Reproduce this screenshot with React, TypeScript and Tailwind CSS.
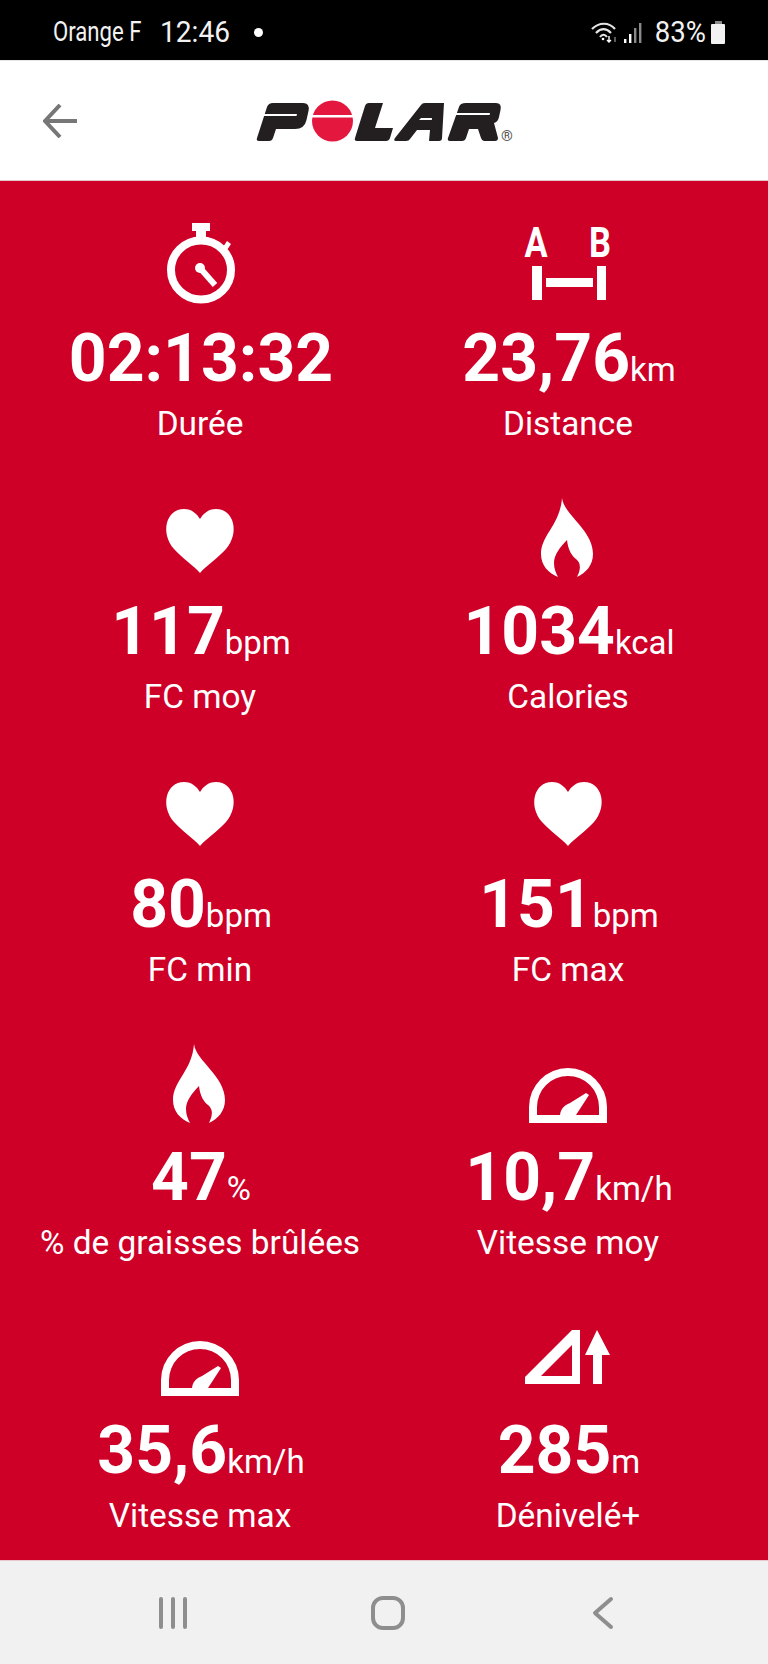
import React from 'react';

// --- ICONS ---
const Stopwatch = () => (
  <svg width="100" height="84" viewBox="0 0 100 84" fill="white">
    <rect x="42" y="1" width="18" height="8" />
    <rect x="46" y="9" width="10" height="10" />
    <ellipse cx="51" cy="48" rx="30" ry="29.5" fill="none" stroke="white" strokeWidth="8" />
    <path d="M73 25 L77 19 L81 22 L77 28 Z" />
    <circle cx="50" cy="46" r="5" />
    <path d="M50 46 L65 63" stroke="white" strokeWidth="6" />
  </svg>
);

const AB = () => (
  <div className="w-[100px] h-[84px] flex flex-col">
    <div className="h-[40px] px-[6px] flex justify-between text-[42px] leading-[41px] font-bold">
      <span className="w-[24px] flex justify-center scale-x-[.82]">A</span>
      <span className="w-[24px] flex justify-center scale-x-[.82]">B</span>
    </div>
    <svg width="100" height="44" viewBox="0 40 100 44" fill="white">
      <rect x="14" y="44" width="10" height="34" />
      <rect x="79" y="44" width="9" height="34" />
      <rect x="28" y="56" width="47" height="9" />
    </svg>
  </div>
);

const Heart = () => (
  <svg width="100" height="84" viewBox="0 0 100 84" fill="white">
    <path d="M50 78 C44 71 32 63 24 54 C10 38 16 14 34 14 C42 14 47 19 50 24 C53 19 58 14 66 14 C84 14 90 38 76 54 C68 63 56 71 50 78 Z" />
  </svg>
);

const Flame = () => (
  <svg width="100" height="84" viewBox="0 0 100 84" fill="white">
    <path d="M44 3 C46 20 75 35 75 59 C75 70 68 78 59 82 C63 74 63 68 58 64 C54 61 50 55 49 45 C42 52 36 60 36 68 C36 74 38 78 40 82 C30 78 23 70 23 59 C23 40 42 30 44 3 Z" />
  </svg>
);

const Gauge = () => (
  <svg width="100" height="84" viewBox="0 0 100 84" fill="white">
    <path fillRule="evenodd" d="M11 82 V66 A39 39 0 0 1 89 66 V82 Z M19 74 H81 V66 A31 31 0 0 0 19 66 Z" />
    <path d="M42 74 C43 66 48 64 52 62 L68 52 L71 54 L58 74 Z" />
  </svg>
);

const Elevation = () => (
  <svg width="100" height="84" viewBox="0 0 100 84" fill="white">
    <path fillRule="evenodd" d="M54 16 H62 V70 H7 V63 Z M54 31 L23 62 H54 Z" />
    <path d="M79 16 L92 41 H84 V70 H75 V41 H67 Z" />
  </svg>
);

const PolarLogo = () => (
  <svg width="280" height="70" viewBox="0 0 280 70" className="shrink-0">
    <g fill="#231f20">
      <path d="M33 17 H63 Q70 17 68.5 25 L66.5 34 Q64.5 43 55 43 H36 L33 52 Q32 55 29 55 H19 Q16 55 17 52 L27 21 Q28.5 17 33 17 Z" />
      <path d="M129 17 H143 L135 42 H153 L150 52 Q149 55 146 55 H117 Q114 55 115 52 L125 20 Q126 17 129 17 Z" />
      <path d="M185 17 H204 L202 52 Q202 55 199 55 H189 L190 44 H177 L170 53 Q169 55 166 55 H156 Q153 55 155 52 L181 19 Q182 17 185 17 Z" />
      <path d="M226 17 H256 Q262 17 260.5 24 L259 31 Q258 36 254 37 L258 52 Q258 55 255 55 H244 Q242 55 241 52 L238 43 H229 L226 52 Q225 55 222 55 H210 Q207 55 208 52 L219 21 Q220 17 226 17 Z" />
    </g>
    <circle cx="92.5" cy="35" r="20.5" fill="#e4173e" />
    <g fill="white">
      <path d="M20 28 H57 L56.5 30 H19 Z" />
      <rect x="70" y="29" width="46" height="2.5" />
      <path d="M181 32 H192 L191.8 34 H179 Z" />
      <path d="M216 27 H250 L249.6 29 H215 Z" />
    </g>
    <text x="267" y="55" textAnchor="middle" fontFamily="Roboto" fontSize="15" fill="#555">®</text>
  </svg>
);

const StatusIcons = () => (
  <svg width="56" height="24" viewBox="0 0 56 24" fill="none" stroke="white" className="shrink-0">
    <path d="M2 8 C9 1 19 1 25 8" strokeWidth="2.2" opacity="0.9" />
    <path d="M6 12 C11 7 16 7 21 12" strokeWidth="2.2" opacity="0.9" />
    <path d="M10 16 C12 13 15 13 17 16" strokeWidth="2" opacity="0.9" />
    <circle cx="13" cy="18" r="1.3" fill="white" stroke="none" />
    <path d="M19 15 V21 M17 19 L19 21 L21 19" strokeWidth="1.4" />
    <path d="M25 21 V16" strokeWidth="1.4" opacity="0.5" />
    <rect x="34" y="18" width="2.4" height="4" fill="white" stroke="none" />
    <rect x="39" y="13" width="2.4" height="9" fill="white" stroke="none" />
    <rect x="44" y="7" width="2.4" height="15" fill="#8a8a8a" stroke="none" />
    <rect x="49" y="2" width="2.4" height="20" fill="#8a8a8a" stroke="none" />
  </svg>
);

const stats = [
  { icon: <Stopwatch />, value: '02:13:32', unit: '', label: 'Durée' },
  { icon: <AB />, value: '23,76', unit: 'km', label: 'Distance' },
  { icon: <Heart />, value: '117', unit: 'bpm', label: 'FC moy' },
  { icon: <Flame />, value: '1034', unit: 'kcal', label: 'Calories' },
  { icon: <Heart />, value: '80', unit: 'bpm', label: 'FC min' },
  { icon: <Heart />, value: '151', unit: 'bpm', label: 'FC max' },
  { icon: <Flame />, value: '47', unit: '%', label: '% de graisses brûlées' },
  { icon: <Gauge />, value: '10,7', unit: 'km/h', label: 'Vitesse moy' },
  { icon: <Gauge />, value: '35,6', unit: 'km/h', label: 'Vitesse max' },
  { icon: <Elevation />, value: '285', unit: 'm', label: 'Dénivelé+' },
];

const Stat = ({ icon, value, unit, label }: { icon: React.ReactNode; value: string; unit: string; label: string }) => (
  <div className="flex flex-col items-center h-[273px] text-white">
    <div className="h-[84px]">{icon}</div>
    <div className="mt-[15px] pl-[2px] h-[76px] leading-[76px] whitespace-nowrap text-[66px] font-bold">
      {value}
      {unit && <span className="text-[33px] font-normal">{unit}</span>}
    </div>
    <div className="text-[33.4px] leading-[40px] mt-[7px] whitespace-nowrap">{label}</div>
  </div>
);

export default function App() {
  return (
    <div className="w-[768px] h-[1664px] flex flex-col overflow-hidden font-[Roboto,sans-serif] bg-white">
      {/* status bar */}
      <div className="h-[61px] shrink-0 bg-black border-b border-[#e6e6e6] flex items-center pt-[5px] pl-[53px] pr-[43px] text-[#f2f2f2]">
        <span className="text-[27px] w-[107px] whitespace-nowrap origin-left scale-x-[.82]">Orange F</span>
        <span className="text-[29px] w-[94px] whitespace-nowrap origin-left scale-x-[.97]">12:46</span>
        <span className="w-[9px] h-[9px] rounded-full bg-white" />
        <div className="ml-auto flex items-center">
          <StatusIcons />
          <span className="text-[29px] ml-[6px] origin-right scale-x-[.95]">83%</span>
          <div className="ml-[5px] flex flex-col items-center">
            <div className="w-[7px] h-[3px] bg-[#8a8a8a]" />
            <div className="w-[14px] h-[20px] bg-[#f2f2f2] rounded-[1px]" />
          </div>
        </div>
      </div>

      {/* header */}
      <header className="h-[120px] shrink-0 bg-white flex items-center pl-[43px] border-b border-[#e3c5cb]">
        <svg width="34" height="34" viewBox="0 0 34 34" fill="none" stroke="#777777" strokeWidth="4" className="shrink-0">
          <path d="M17 1 L2 17 L17 33 M2 17 H34" />
        </svg>
        <div className="ml-[163px]">
          <PolarLogo />
        </div>
      </header>

      {/* stats */}
      <main className="flex-1 min-h-0 overflow-hidden bg-[#ce0027] px-4 pt-[41px] grid grid-cols-2 content-start">
        {stats.map((s) => (
          <Stat key={s.label} {...s} />
        ))}
      </main>

      {/* nav bar */}
      <nav className="h-[104px] shrink-0 bg-[#f1f1f1] border-t border-[#e8c8ce] flex items-center pl-[158px]">
        <svg width="30" height="34" viewBox="0 0 30 34" fill="none" stroke="#8e8e8e" strokeWidth="4" strokeLinecap="round">
          <path d="M3 3 V31 M15 3 V31 M27 3 V31" />
        </svg>
        <svg width="34" height="34" viewBox="0 0 34 34" fill="none" stroke="#8e8e8e" strokeWidth="4" className="ml-[183px]">
          <rect x="2" y="2" width="30" height="30" rx="10" />
        </svg>
        <svg width="22" height="34" viewBox="0 0 22 34" fill="none" stroke="#8e8e8e" strokeWidth="4" strokeLinecap="round" strokeLinejoin="round" className="ml-[187px]">
          <path d="M19 3 L3 17 L19 31" />
        </svg>
      </nav>
    </div>
  );
}
